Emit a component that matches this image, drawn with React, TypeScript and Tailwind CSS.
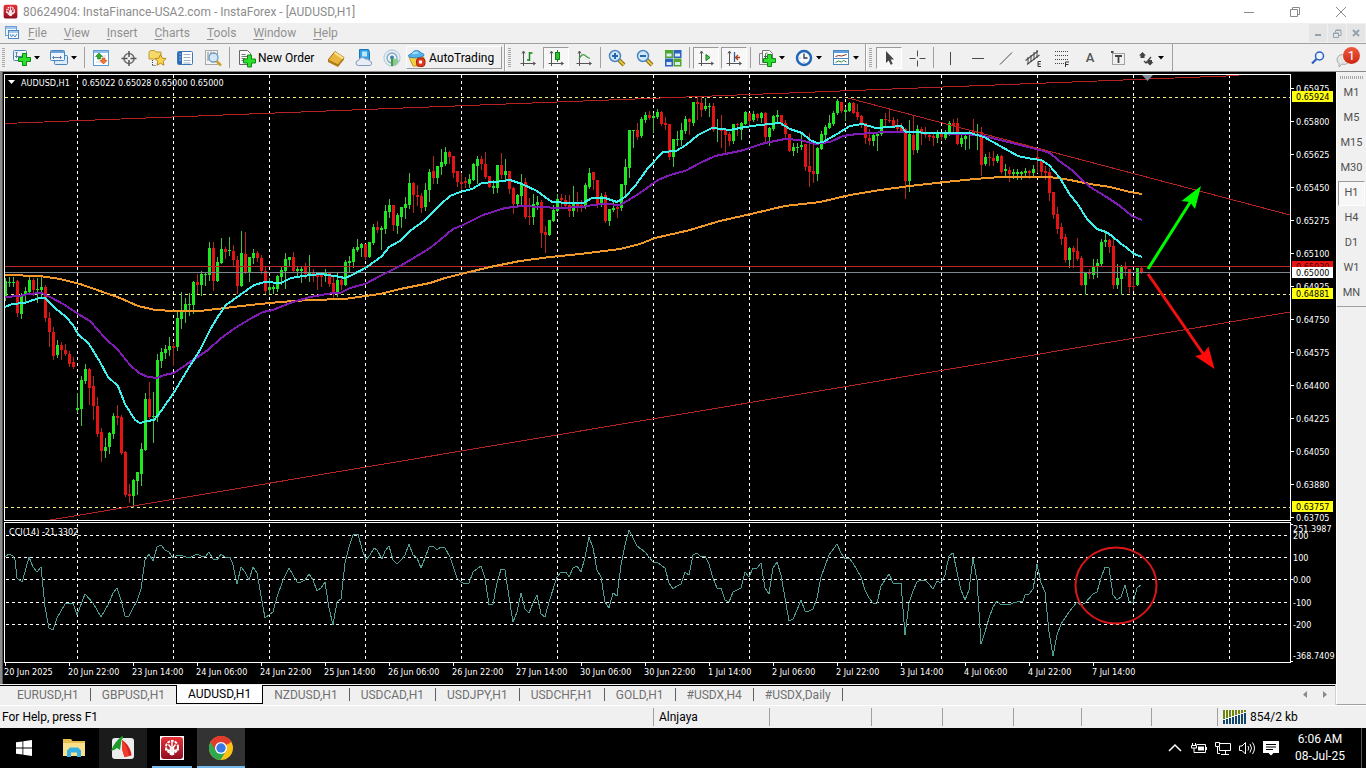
import type { ReactNode } from "react";

// One row per hourly bar: [high, body top, body bottom, low, bullish]
type Bar = [number, number, number, number, 0 | 1];

const BARS: Bar[] = [
  [278, 281, 298, 300, 1], [277, 282, 283, 286, 1], [277, 282, 283, 286, 1], [280, 281, 313, 316, 0],
  [293, 295, 314, 318, 1], [287, 291, 295, 302, 1], [277, 280, 292, 293, 1], [278, 280, 290, 295, 0],
  [278, 289, 290, 302, 1], [276, 287, 290, 297, 1], [285, 287, 318, 321, 0], [312, 318, 332, 346, 0],
  [327, 332, 356, 359, 0], [340, 345, 355, 357, 1], [342, 345, 350, 359, 0], [344, 350, 354, 355, 0],
  [351, 354, 364, 366, 0], [357, 362, 367, 368, 0], [393, 408, 410, 412, 1], [376, 380, 409, 425, 1],
  [364, 369, 381, 383, 1], [368, 369, 388, 404, 0], [376, 386, 406, 419, 0], [397, 406, 434, 436, 0],
  [428, 432, 451, 461, 0], [438, 447, 451, 457, 1], [432, 433, 447, 453, 1], [413, 416, 434, 438, 1],
  [405, 416, 418, 424, 0], [415, 417, 453, 454, 0], [451, 452, 495, 496, 0], [484, 494, 496, 502, 0],
  [479, 480, 496, 507, 1], [472, 472, 481, 494, 1], [443, 449, 474, 485, 1], [393, 399, 450, 450, 1],
  [382, 399, 417, 418, 0], [392, 416, 417, 442, 1], [354, 360, 417, 421, 1], [348, 352, 361, 367, 1],
  [345, 349, 353, 358, 1], [337, 346, 350, 355, 1], [343, 346, 348, 365, 0], [311, 318, 347, 350, 1],
  [292, 311, 319, 328, 1], [298, 304, 312, 322, 1], [293, 304, 305, 315, 1], [281, 282, 305, 313, 1],
  [274, 282, 285, 293, 0], [271, 274, 285, 295, 1], [272, 274, 275, 285, 1], [242, 248, 275, 280, 1],
  [242, 248, 281, 290, 0], [257, 262, 281, 281, 1], [238, 249, 263, 263, 1], [247, 249, 252, 258, 0],
  [237, 250, 251, 255, 1], [245, 251, 260, 266, 0], [256, 260, 286, 293, 0], [231, 253, 286, 286, 1],
  [232, 254, 272, 273, 0], [257, 257, 272, 281, 1], [249, 253, 258, 263, 1], [251, 253, 258, 261, 0],
  [255, 258, 271, 273, 0], [267, 271, 291, 293, 0], [278, 287, 290, 293, 1], [285, 287, 289, 293, 1],
  [275, 276, 289, 291, 1], [267, 270, 277, 284, 1], [253, 259, 271, 288, 1], [257, 257, 260, 265, 1],
  [252, 257, 271, 272, 0], [267, 269, 271, 277, 1], [266, 269, 271, 282, 1], [263, 267, 274, 278, 0],
  [255, 273, 275, 281, 1], [269, 273, 276, 281, 0], [273, 274, 277, 289, 0], [274, 275, 277, 286, 0],
  [269, 273, 276, 281, 1], [272, 273, 284, 286, 0], [276, 283, 294, 297, 0], [272, 280, 294, 296, 1],
  [276, 280, 285, 289, 0], [260, 262, 285, 285, 1], [256, 261, 263, 272, 1], [247, 249, 262, 267, 1],
  [239, 247, 250, 251, 1], [243, 244, 248, 256, 1], [244, 244, 257, 259, 0], [242, 242, 257, 257, 1],
  [224, 227, 243, 244, 1], [221, 227, 230, 232, 0], [226, 228, 230, 249, 1], [205, 211, 229, 233, 1],
  [199, 205, 212, 217, 1], [205, 205, 225, 230, 0], [213, 215, 226, 233, 1], [207, 207, 217, 227, 1],
  [197, 204, 208, 218, 1], [173, 183, 205, 208, 1], [182, 183, 195, 212, 0], [185, 195, 197, 205, 0],
  [193, 196, 208, 212, 0], [183, 190, 207, 210, 1], [169, 172, 190, 201, 1], [156, 171, 178, 183, 0],
  [166, 166, 178, 183, 1], [149, 162, 167, 174, 1], [147, 152, 164, 165, 1], [151, 152, 157, 163, 0],
  [156, 156, 173, 177, 0], [171, 171, 182, 186, 0], [173, 182, 184, 189, 0], [177, 181, 183, 187, 0],
  [174, 179, 184, 187, 1], [163, 164, 180, 180, 1], [156, 159, 166, 183, 1], [156, 159, 164, 169, 0],
  [152, 164, 177, 178, 0], [176, 176, 187, 187, 0], [180, 186, 188, 193, 1], [165, 165, 188, 192, 1],
  [153, 165, 175, 178, 0], [159, 171, 175, 179, 1], [171, 171, 189, 193, 0], [187, 188, 204, 213, 0],
  [194, 195, 204, 207, 1], [174, 183, 196, 206, 1], [178, 182, 217, 218, 0], [198, 216, 217, 224, 0],
  [194, 204, 217, 224, 1], [196, 202, 205, 209, 1], [200, 202, 233, 247, 0], [226, 232, 235, 252, 0],
  [220, 220, 235, 235, 1], [205, 210, 221, 221, 1], [194, 199, 211, 211, 1], [194, 198, 200, 207, 0],
  [195, 200, 206, 208, 0], [195, 205, 211, 216, 0], [186, 204, 211, 216, 1], [192, 203, 207, 211, 0],
  [200, 205, 207, 211, 0], [183, 185, 207, 208, 1], [168, 173, 187, 188, 1], [172, 172, 180, 189, 0],
  [180, 180, 204, 207, 0], [193, 196, 204, 206, 1], [192, 195, 221, 222, 0], [209, 209, 221, 225, 1],
  [202, 208, 210, 211, 1], [206, 207, 209, 217, 0], [184, 184, 208, 210, 1], [159, 167, 185, 194, 1],
  [130, 130, 168, 177, 1], [130, 130, 131, 147, 1], [123, 130, 137, 139, 0], [117, 119, 136, 137, 1],
  [112, 115, 120, 122, 1], [111, 115, 118, 119, 0], [113, 116, 118, 132, 1], [109, 112, 117, 118, 1],
  [111, 112, 124, 125, 0], [117, 123, 125, 129, 0], [124, 124, 157, 159, 0], [139, 139, 157, 166, 1],
  [131, 139, 140, 145, 1], [123, 130, 140, 145, 1], [116, 119, 131, 133, 1], [118, 119, 122, 134, 0],
  [102, 102, 123, 125, 1], [97, 102, 104, 119, 0], [97, 103, 110, 116, 0], [98, 106, 109, 110, 1],
  [103, 106, 107, 116, 1], [103, 106, 130, 131, 0], [119, 128, 129, 141, 1], [115, 129, 131, 147, 0],
  [129, 130, 135, 152, 0], [132, 134, 141, 145, 0], [124, 124, 141, 143, 1], [123, 124, 125, 135, 0],
  [122, 123, 130, 139, 1], [111, 112, 124, 124, 1], [113, 113, 121, 125, 0], [111, 114, 120, 121, 1],
  [113, 114, 118, 120, 0], [112, 113, 118, 122, 1], [112, 113, 137, 141, 0], [127, 128, 137, 145, 1],
  [115, 116, 129, 130, 1], [110, 115, 117, 122, 1], [115, 115, 124, 125, 0], [120, 123, 134, 138, 0],
  [134, 134, 151, 151, 0], [143, 147, 151, 155, 1], [143, 147, 148, 152, 1], [134, 145, 147, 149, 1],
  [144, 144, 167, 170, 0], [133, 166, 172, 186, 0], [145, 171, 174, 182, 0], [147, 148, 174, 180, 1],
  [131, 134, 149, 149, 1], [125, 127, 135, 139, 1], [115, 123, 128, 128, 1], [111, 113, 124, 125, 1],
  [99, 101, 113, 114, 1], [102, 102, 111, 112, 0], [107, 110, 112, 120, 1], [102, 103, 111, 111, 1],
  [102, 103, 113, 113, 0], [104, 112, 117, 119, 0], [115, 116, 124, 127, 0], [123, 123, 138, 143, 0],
  [129, 138, 141, 144, 0], [134, 135, 141, 145, 1], [132, 134, 136, 150, 1], [119, 119, 134, 135, 1],
  [113, 119, 120, 125, 0], [108, 120, 121, 122, 0], [117, 120, 127, 127, 0], [119, 125, 129, 131, 0],
  [123, 127, 131, 131, 0], [128, 129, 181, 198, 0], [120, 134, 181, 191, 1], [115, 135, 150, 154, 0],
  [125, 129, 150, 152, 1], [127, 129, 133, 144, 0], [127, 132, 135, 137, 0], [132, 135, 137, 140, 0],
  [133, 136, 138, 145, 0], [130, 134, 138, 142, 1], [132, 134, 137, 139, 0], [130, 134, 138, 139, 1],
  [121, 123, 134, 135, 1], [119, 123, 126, 133, 0], [118, 123, 144, 144, 0], [134, 138, 144, 146, 1],
  [133, 136, 139, 149, 1], [130, 133, 135, 148, 1], [119, 131, 133, 135, 0], [124, 132, 133, 149, 1],
  [127, 132, 165, 175, 0], [154, 157, 164, 165, 1], [152, 157, 158, 165, 0], [151, 158, 161, 165, 0],
  [154, 156, 161, 162, 1], [155, 156, 172, 173, 0], [164, 169, 171, 176, 1], [167, 170, 174, 181, 0],
  [169, 172, 174, 178, 1], [169, 172, 174, 179, 1], [171, 172, 174, 179, 1], [168, 171, 173, 176, 1],
  [170, 171, 173, 178, 0], [165, 169, 173, 175, 1], [150, 157, 160, 172, 0], [160, 160, 172, 175, 0],
  [166, 171, 173, 179, 0], [168, 172, 193, 200, 0], [192, 192, 215, 218, 0], [207, 214, 229, 233, 0],
  [223, 227, 239, 244, 0], [234, 237, 260, 262, 0], [247, 248, 260, 267, 1], [246, 248, 252, 267, 0],
  [238, 251, 259, 260, 0], [256, 258, 285, 285, 0], [273, 273, 285, 294, 1], [269, 272, 274, 278, 0],
  [259, 267, 275, 278, 1], [259, 263, 267, 277, 1], [239, 242, 264, 266, 1], [233, 240, 242, 246, 1],
  [239, 240, 247, 252, 0], [239, 246, 285, 288, 0], [264, 278, 285, 288, 1], [265, 267, 279, 294, 1],
  [262, 267, 269, 275, 0], [269, 269, 287, 292, 0], [277, 286, 287, 290, 0], [268, 268, 285, 285, 1],
  [267, 268, 273, 273, 0],
];

const FAST_MA =
  "5,307 12,304 25,303 33,300 40,298 45,298 55,308 66,317 73,325 78,334 89,344 100,362 108,377 118,386 125,404 135,420 140,423 147,421 154,420 161,411 173,394 188,369 200,350 210,330 217,318 226,305 240,295 254,285 265,282 281,283 291,278 303,276 320,274 335,276 345,278 352,275 367,267 382,256 389,247 400,241 410,231 425,220 440,205 450,196 460,192 472,189 482,183 495,182 510,180 522,184 537,191 545,197 552,202 570,203 583,203 592,198 605,198 617,202 625,197 635,186 648,168 663,152 676,151 686,145 698,135 712,128 730,130 745,127 760,125 780,123 790,129 802,133 810,140 817,143 823,142 837,134 850,126 862,124 876,128 890,127 901,126 906,132 935,133 950,133 970,133 984,137 1000,146 1018,156 1032,159 1041,160 1049,165 1060,178 1070,195 1077,203 1087,219 1097,229 1106,232 1112,236 1120,243 1127,248 1134,254 1142,257";
const MID_MA =
  "5,297 20,296 28,294 42,293 50,297 65,305 78,314 90,321 105,338 118,350 130,365 139,373 148,377 157,378 164,375 174,373 190,362 208,350 220,339 235,328 250,319 263,312 273,310 290,303 310,297 333,293 340,293 350,288 365,284 380,276 400,266 412,259 430,248 440,240 453,229 463,225 483,215 505,208 523,206 540,207 560,208 583,207 592,205 605,204 620,205 627,201 640,193 658,180 670,175 685,171 700,163 715,156 740,151 765,143 785,139 800,140 815,144 830,142 843,136 857,134 885,132 906,132 960,134 980,135 1000,140 1040,150 1050,153 1058,160 1073,171 1080,178 1090,187 1105,196 1120,206 1132,216 1142,220";
const SLOW_MA =
  "5,275 40,276 60,279 80,284 100,291 120,298 138,306 155,310 175,311 200,311 225,308 250,305 280,302 310,300 345,299 365,296 380,294 400,289 430,283 445,278 465,273 490,267 520,261 550,257 580,254 620,249 640,244 655,238 690,230 720,221 755,213 785,206 820,202 850,195 880,190 910,186 945,182 975,179 1000,177 1050,177 1070,180 1090,184 1110,187 1130,192 1142,194";
const CCI =
  "5,557 9,554 13,556 15,560 17,578 22,582 25,572 29,557 33,567 37,572 41,567 45,607 49,628 53,630 57,618 65,604 73,603 77,615 85,594 93,603 101,617 109,603 113,593 117,588 121,600 125,616 129,616 133,608 137,601 141,589 145,560 149,554 153,561 157,547 161,545 165,550 169,552 173,558 178,555 183,556 189,558 197,554 201,556 205,557 209,552 213,559 217,560 221,554 225,557 230,557 233,565 237,584 241,567 245,572 249,580 253,567 257,573 265,618 273,612 277,597 283,580 289,568 293,575 297,582 301,582 305,580 309,574 313,580 317,591 321,588 325,582 329,608 333,625 337,602 341,599 345,563 349,547 353,535 358,534 362,549 366,560 370,555 374,548 377,550 382,559 385,551 389,546 393,560 397,564 401,560 405,555 409,544 413,555 417,558 421,568 425,558 429,547 433,546 437,550 441,547 445,548 450,557 457,578 461,582 465,584 469,583 473,572 481,566 485,578 489,605 493,604 497,583 501,569 505,570 509,597 513,622 517,612 521,593 525,609 529,613 533,603 537,595 541,614 545,617 549,602 557,577 561,572 566,572 569,577 573,568 577,566 581,572 585,557 589,537 593,548 597,570 601,577 605,602 609,608 613,593 617,596 621,565 625,545 629,530 633,538 637,546 645,552 653,562 657,562 665,568 669,583 673,589 677,586 681,584 685,572 689,575 693,555 697,553 701,557 705,556 709,564 713,578 717,588 721,588 725,600 729,602 733,592 737,590 741,588 745,572 749,577 753,568 757,568 761,563 765,588 769,594 773,568 777,562 781,575 785,598 789,621 793,619 797,610 801,600 805,611 809,611 813,609 817,598 821,577 825,566 829,555 837,544 841,553 845,559 849,558 853,563 857,570 861,577 865,590 869,598 873,603 877,603 881,586 885,580 889,574 893,583 901,583 905,635 909,603 913,591 917,582 921,580 925,580 929,584 933,589 937,581 941,583 945,575 949,556 953,553 957,572 961,590 965,600 969,590 973,558 977,580 981,644 985,632 989,618 993,607 997,601 1001,605 1005,604 1009,605 1013,603 1017,602 1023,601 1025,595 1029,594 1033,589 1035,578 1037,564 1041,583 1045,592 1049,632 1053,656 1057,635 1061,624 1069,612 1077,602 1081,605 1085,603 1093,594 1097,592 1101,578 1105,567 1109,568 1113,595 1117,600 1121,597 1125,585 1129,601 1133,603 1137,588 1141,585";

const DATES = [
  "20 Jun 2025", "20 Jun 22:00", "23 Jun 14:00", "24 Jun 06:00", "24 Jun 22:00", "25 Jun 14:00",
  "26 Jun 06:00", "26 Jun 22:00", "27 Jun 14:00", "30 Jun 06:00", "30 Jun 22:00", "1 Jul 14:00",
  "2 Jul 06:00", "2 Jul 22:00", "3 Jul 14:00", "4 Jul 06:00", "4 Jul 22:00", "7 Jul 14:00",
];
const PRICES = [
  "0.65975", "0.65800", "0.65625", "0.65450", "0.65275", "0.65100", "0.64925",
  "0.64750", "0.64575", "0.64400", "0.64225", "0.64050", "0.63880", "0.63705",
];
const CCI_LEVELS: [string, number][] = [["200", 535], ["100", 557], ["0.00", 579], ["-100", 602], ["-200", 624]];
const DAYS = Array.from({ length: 13 }, (_, i) => 77 + i * 96);

const TABS = [
  "EURUSD,H1", "GBPUSD,H1", "AUDUSD,H1", "NZDUSD,H1", "USDCAD,H1",
  "USDJPY,H1", "USDCHF,H1", "GOLD,H1", "#USDX,H4", "#USDX,Daily",
];
const TIMEFRAMES = ["M1", "M5", "M15", "M30", "H1", "H4", "D1", "W1", "MN"];
const MENU = ["File", "View", "Insert", "Charts", "Tools", "Window", "Help"];

function PriceTag({ y, fill, color, value }: { y: number; fill: string; color: string; value: string }) {
  return (
    <>
      <rect x="1292" y={y} width="41" height="11" fill={fill} />
      <text x="1296" y={y + 9} fill={color}>{value}</text>
    </>
  );
}

function Chart() {
  return (
    <svg
      viewBox="2 72 1334 612"
      className="block h-auto w-full bg-black font-['DejaVu_Sans_Condensed','DejaVu_Sans',sans-serif] text-[9px]"
      role="img"
      aria-label="AUDUSD hourly chart"
    >
      <rect x="2" y="72" width="1" height="612" fill="#555" />

      {/* grid */}
      <g stroke="#fff" strokeDasharray="3 3" shapeRendering="crispEdges">
        {DAYS.map((x) => (
          <path key={x} d={`M${x + 0.5} 75V520M${x + 0.5} 524V659`} />
        ))}
        {CCI_LEVELS.map(([, y]) => (
          <path key={y} d={`M6 ${y + 0.5}H1288`} />
        ))}
      </g>
      <path d="M5 97.5H1290M5 294.5H1290M5 507.5H1290" stroke="#f0f080" strokeDasharray="3 3" shapeRendering="crispEdges" />

      <g shapeRendering="crispEdges">
        {BARS.map(([high, top, bottom, low, up], i) => {
          const x = 5 + i * 4;
          return (
            <g key={i}>
              <rect x={x} y={high} width="1" height={low - high + 1} fill={up ? "#46c046" : "#b02a22"} />
              <rect x={x - 1} y={top} width="3" height={Math.max(bottom - top, 1)} fill={up ? "#1ee81e" : "#e41414"} />
            </g>
          );
        })}
      </g>

      <path d="M5 266.5H1290" stroke="#b82828" shapeRendering="crispEdges" />
      <path d="M5 272.5H1290" stroke="#7d868e" shapeRendering="crispEdges" />
      <g fill="none" strokeWidth="2" strokeLinejoin="round" shapeRendering="crispEdges">
        <polyline points={SLOW_MA} stroke="#f0982a" />
        <polyline points={MID_MA} stroke="#7e1cb4" />
        <polyline points={FAST_MA} stroke="#40f0ee" />
      </g>
      <g stroke="#b42222" shapeRendering="crispEdges">
        <path d="M5 123.5L1239 75.5" />
        <path d="M50 520L1290 312" />
        <path d="M848 98L1290 215" />
      </g>
      <polyline points={CCI} fill="none" stroke="#4f9c94" shapeRendering="crispEdges" />

      {/* window frames */}
      <g fill="none" stroke="#fff" shapeRendering="crispEdges">
        <path d="M4.5 520.5V74.5H1290.5V520.5Z" />
        <path d="M4.5 522.5H1290.5V662.5H4.5Z" />
        {PRICES.map((p, i) => (
          <path key={p} d={`M1291 ${88.5 + i * 33}h3`} />
        ))}
        {DATES.map((d, i) => (
          <path key={d} d={`M${5.5 + i * 64} 663v3`} />
        ))}
        <path d="M1291 524.5h2M1291 661.5h2M1291 579.5h2" />
      </g>
      <path d="M1142 75h11l-5.500 6z" fill="#7f8b98" />

      {/* scales */}
      <g fill="#fff">
        <path d="M8 80h7l-3.500 4z" />
        <text x="21" y="86">AUDUSD,H1</text>
        <text x="82" y="86">0.65022 0.65028 0.65000 0.65000</text>
        <text x="9" y="535">CCI(14) -21.3302</text>
        {PRICES.map((p, i) => (
          <text key={p} x="1296" y={92 + i * 33}>{p}</text>
        ))}
        <text x="1293" y="532">251.3987</text>
        {CCI_LEVELS.map(([label, y]) => (
          <text key={label} x="1293" y={y + 4}>{label}</text>
        ))}
        <text x="1293" y="659">-368.7409</text>
        {DATES.map((d, i) => (
          <text key={d} x={4 + i * 64} y="675">{d}</text>
        ))}
      </g>
      <PriceTag y={91} fill="#ffff10" color="#000" value="0.65924" />
      <PriceTag y={261} fill="#e81414" color="#400" value="0.65030" />
      <PriceTag y={267} fill="#fff" color="#000" value="0.65000" />
      <PriceTag y={288} fill="#ffff10" color="#000" value="0.64881" />
      <PriceTag y={501} fill="#ffff10" color="#000" value="0.63757" />

      {/* scenario drawings */}
      <path d="M1148 269L1191 201" stroke="#00fa00" strokeWidth="3" />
      <path d="M1201 186L1181.500 201L1190 202L1195 209Z" fill="#00fa00" />
      <path d="M1148 274L1204 355" stroke="#f01010" strokeWidth="3" />
      <path d="M1214.500 369L1195 356L1203 354L1208.500 346.500Z" fill="#ff0a0a" />
      <ellipse cx="1116" cy="585.500" rx="40.500" ry="38" fill="none" stroke="#dc1616" strokeWidth="2" />
    </svg>
  );
}

function Icon({ children, size = 20 }: { children: ReactNode; size?: number }) {
  return (
    <svg width={size} height={size} viewBox="0 0 20 20" fill="none" className="shrink-0" aria-hidden="true">
      {children}
    </svg>
  );
}

const Plus = ({ x, y }: { x: number; y: number }) => (
  <path
    d={`M${x + 4} ${y}h4v4h4v4h-4v4h-4v-4h-4v-4h4z`}
    fill="#2be02b"
    stroke="#0d8a12"
    strokeWidth="1"
  />
);

const Axes = () => (
  <path d="M5.500 3.500V18M2.500 15.500H17M4 5.500L5.500 3L7 5.500M15 14l2.500 1.500L15 17" stroke="#555" />
);

const Magnifier = ({ minus }: { minus?: boolean }) => (
  <>
    <path d="M12 12l5 5" stroke="#8a6d10" strokeWidth="4" />
    <path d="M12 12l5 5" stroke="#e8c840" strokeWidth="2" />
    <circle cx="8" cy="8" r="5.500" fill="#cfe8fb" stroke="#4d86c0" strokeWidth="1.500" />
    <path d={minus ? "M5 8h6" : "M5 8h6M8 5v6"} stroke="#2767a8" strokeWidth="2" />
  </>
);

const ICONS: Record<string, ReactNode> = {
  newChart: (
    <>
      <rect x="1.500" y="2.500" width="13" height="10" rx="1" fill="#eef5fc" stroke="#4a84bd" />
      <path d="M4.500 4v6M3 8.500h8M3.500 5l1-1 1 1M10 7.500l1 1-1 1" stroke="#5c7fa5" />
      <Plus x={6.5} y={5.5} />
    </>
  ),
  profiles: (
    <>
      <rect x="5.500" y="7.500" width="13" height="9" rx="1" fill="#dcebf8" stroke="#4a84bd" />
      <rect x="1.500" y="2.500" width="14" height="10" rx="1" fill="#eef5fc" stroke="#4a84bd" />
      <path d="M2 4h13" stroke="#6fa3d6" strokeWidth="2" />
      <path d="M4 9.500h8M5 8l-1.500 1.500L5 11M11 8l1.500 1.500L11 11" stroke="#5c7fa5" />
    </>
  ),
  marketWatch: (
    <>
      <rect x="2.500" y="2.500" width="15" height="15" fill="#fff" stroke="#5b9bd8" />
      <path d="M3 4h14" stroke="#8fc0ee" strokeWidth="2" />
      <path d="M5 14h10M5 8h10" stroke="#c8d6e4" />
      <path d="M8 5l3.500 3.500H9.500V11h-3V8.500H4.500z" fill="#2eae2e" stroke="#117a11" strokeWidth=".6" />
      <path d="M12.500 16L9 12.500h2V10h3v2.500h2z" fill="#f07a30" stroke="#c43e10" strokeWidth=".6" />
    </>
  ),
  target: (
    <>
      <circle cx="10" cy="10.500" r="5" stroke="#707070" strokeWidth="1.500" />
      <path d="M10 3v6M10 12v6M2.500 10.500h6M11.500 10.500h6" stroke="#555" strokeWidth="1.500" />
    </>
  ),
  navigator: (
    <>
      <path d="M2 4l1.500-1.500h4L9 4h5v7H2z" fill="#f5d96a" stroke="#c29a2a" />
      <path d="M5.500 12v6M5.500 17.500h4" stroke="#444" strokeDasharray="1 1" />
      <path d="M13.500 6.500l1.700 3.600 3.900.5-2.900 2.700.8 3.900-3.500-1.900-3.500 1.900.8-3.900L8 10.600l3.800-.5z" fill="#fbd648" stroke="#b8891c" />
    </>
  ),
  dataWindow: (
    <>
      <rect x="2.500" y="3.500" width="15" height="13" rx="1" fill="#fff" stroke="#3f77b0" />
      <rect x="3" y="4" width="4" height="12" fill="#2e6bb4" />
      <path d="M8.500 6.500h7M8.500 9.500h7M8.500 12.500h7M8.500 15h7" stroke="#9bb2c8" />
      <path d="M4.500 6h1M4.500 9h1M4.500 12h1" stroke="#fff" />
    </>
  ),
  tester: (
    <>
      <rect x="2.500" y="2.500" width="12" height="14" fill="#f4f4f4" stroke="#a8a8a8" />
      <path d="M5 4v9M8 3.500v4M11 4v5" stroke="#888" />
      <circle cx="10.500" cy="9.500" r="4.500" fill="#cfe6f8" fillOpacity=".85" stroke="#6c9cc8" strokeWidth="1.300" />
      <path d="M13.500 13l4.500 4.500" stroke="#d0a22c" strokeWidth="2.500" />
    </>
  ),
  order: (
    <>
      <path d="M2.500 2.500h8l3 3v11h-11z" fill="#fafafa" stroke="#666" />
      <path d="M4.500 6.500h4M4.500 8.500h6M4.500 10.500h4M4.500 12.500h3" stroke="#777" />
      <Plus x={6.500} y={7} />
    </>
  ),
  metaEditor: (
    <>
      <path d="M2 12L9 3.500l9 6-6 7.500z" fill="#e9b53c" stroke="#9a6a10" />
      <path d="M9 3.500l9 6-1.500 2L8 5.500z" fill="#fbe08a" />
      <path d="M2 12l10 5 6-7.500v2l-6 7.500-10-5z" fill="#b57c14" />
    </>
  ),
  cloud: (
    <>
      <path d="M5.500 1.500h9l1 3v7h-10z" fill="#2fa4e8" stroke="#1876b8" />
      <path d="M8 3.500h5v5H8z" fill="#bfe6fb" />
      <path d="M4.500 17.500a2.500 2.500 0 010-5 4 4 0 017-1.500 3.500 3.500 0 014 2 2.300 2.300 0 01.5 4.500z" fill="#e8eef8" stroke="#8497bd" />
    </>
  ),
  signals: (
    <>
      <circle cx="10" cy="10" r="8" stroke="#b9cfe0" strokeWidth="1.300" />
      <circle cx="10" cy="10" r="5" stroke="#7aa6c8" strokeWidth="1.300" />
      <path d="M10 10v8a8 8 0 007-6z" fill="#8cc98c" />
      <circle cx="10" cy="9.500" r="2" fill="#3f7fb4" />
      <path d="M10 10v8" stroke="#3f9c4a" strokeWidth="2" />
    </>
  ),
  auto: (
    <>
      <path d="M2 9l4 9h7l4-9z" fill="#f3cf45" stroke="#c79a1c" />
      <path d="M1.500 8c0-1.500 2-2 3.500-2.500C6 2 12 1.500 14 5c2 .5 3 1 3 2 0 3-15 4-15.500 1z" fill="#55b4ec" stroke="#2b86c4" />
      <path d="M5 6c1-3 6-3.500 7-1-2 1-4 1.500-7 1z" fill="#a6dcfa" />
      <rect x="9.500" y="10" width="8.500" height="8.500" rx="3" fill="#e03a1c" stroke="#a81c08" />
      <rect x="12" y="12.500" width="3" height="3" fill="#fff" />
    </>
  ),
  bars: (
    <>
      <Axes />
      <path d="M11.500 4v9M11.500 5h3M9 12h3" stroke="#18861c" strokeWidth="1.500" />
    </>
  ),
  candles: (
    <>
      <Axes />
      <path d="M11.500 2v12" stroke="#118014" />
      <rect x="9.500" y="4.500" width="4" height="7" fill="#27c62c" stroke="#118014" />
    </>
  ),
  line: (
    <>
      <Axes />
      <path d="M5 11c2-4 4-5 5.500-4S13 9.500 16 10.500" stroke="#3f9a42" strokeWidth="1.300" />
    </>
  ),
  zoomIn: <Magnifier />,
  zoomOut: <Magnifier minus />,
  tile: (
    <>
      <rect x="2" y="2" width="8" height="8" fill="#4fa82c" />
      <rect x="10.500" y="2" width="8" height="8" fill="#2c62c0" />
      <rect x="2" y="10.500" width="8" height="8" fill="#2c62c0" />
      <rect x="10.500" y="10.500" width="8" height="8" fill="#4fa82c" />
      <path d="M3.500 5.500h5v3h-5zM12 5.500h5v3h-5zM3.500 14h5v3h-5zM12 14h5v3h-5z" fill="#dfeaf8" />
    </>
  ),
  autoScroll: (
    <>
      <Axes />
      <path d="M10 6.500v6l4-3z" fill="#59c45c" stroke="#147a18" />
    </>
  ),
  shift: (
    <>
      <Axes />
      <path d="M10.500 4v10" stroke="#2e5f9a" strokeWidth="1.300" />
      <path d="M16 9.500h-4M14 7l-2.500 2.500L14 12" stroke="#b0401c" strokeWidth="1.300" />
    </>
  ),
  indicators: (
    <>
      <path d="M2.500 5.500h8v11h-8z" fill="#f2f2f2" stroke="#888" />
      <path d="M5.500 2.500h7l3 3v9h-10z" fill="#fafafa" stroke="#777" />
      <path d="M10.500 5c-2-.5-2 1-2 3v4M7 8.500h3.500" stroke="#555" />
      <Plus x={6.500} y={6.500} />
    </>
  ),
  clock: (
    <>
      <circle cx="10" cy="10" r="7" fill="#f4f9fe" stroke="#2266b8" strokeWidth="2.500" />
      <path d="M10 5.500V10h3.500" stroke="#333" strokeWidth="1.300" />
      <path d="M10 14v1M5.500 10h1" stroke="#777" />
    </>
  ),
  template: (
    <>
      <rect x="2.500" y="2.500" width="15" height="14" fill="#fff" stroke="#4a86c0" />
      <path d="M3 4h14" stroke="#5f9fdc" strokeWidth="2" />
      <path d="M3 10.500h14" stroke="#4a86c0" />
      <path d="M4.500 8.500l3-1 3 .500 5-1.500" stroke="#8a2a18" />
      <path d="M4.500 14.500l3-1.500 3 1 2-1.500 3 1.500" stroke="#2d8a30" />
    </>
  ),
  cursor: <path d="M7 3v12l2.700-2.600 2 4.400 2-.9-2-4.300H15z" fill="#454545" />,
  cross: <path d="M10.500 2.500v6M10.500 12.500v6M2.500 10.500h6M12.500 10.500h6" stroke="#4a4a4a" />,
  vline: <path d="M10.500 4v13" stroke="#4a4a4a" />,
  hline: <path d="M4 10.500h12" stroke="#4a4a4a" />,
  trend: <path d="M4 16.500L16 4.500" stroke="#4a4a4a" />,
  channel: (
    <>
      <path d="M1.500 12.500L14 3M3 16.500L15.500 7" stroke="#555" strokeWidth="1.300" />
      <path d="M4 9v7M7 7v7M10 4v8M13 2v8" stroke="#444" />
      <path d="M17 13.500h-3v5h3M14 16h2.500" stroke="#333" />
    </>
  ),
  fibo: (
    <>
      <path d="M3 3.500h14M3 7.500h14M3 11.500h14M3 15.500h9" stroke="#444" strokeDasharray="1 1" />
      <path d="M17 14h-3.500v5M13.500 16.500h3" stroke="#333" />
    </>
  ),
  label: (
    <>
      <rect x="4.500" y="5.500" width="12" height="11" stroke="#555" strokeDasharray="1 1" />
      <path d="M3 4h2.500M7 8h7M10.500 8v7" stroke="#444" strokeWidth="1.800" />
    </>
  ),
  arrows: (
    <>
      <path d="M3 7.500L6.500 4 10 7.500H8.500V10h-4V7.500zM10.500 14L14 17.500 17.500 14H16v-2h-4v2z" fill="#444" />
      <path d="M8 13l2 2 5-6" stroke="#444" strokeWidth="1.300" />
    </>
  ),
};

function Tool({ icon, label, pressed, menu }: { icon: string; label: string; pressed?: boolean; menu?: boolean }) {
  const look = pressed
    ? "border-t-[#9a9a9a] border-l-[#9a9a9a] border-b-white border-r-white bg-[#f7f7f7]"
    : "border-transparent";
  return (
    <button
      aria-label={label}
      aria-pressed={pressed}
      className={`flex h-[22px] shrink-0 items-center border ${look} ${menu ? "w-[37px] gap-[2px] pl-[3px]" : "mx-px w-[26px] justify-center"}`}
    >
      <Icon>{ICONS[icon]}</Icon>
      {menu && <Caret />}
    </button>
  );
}

const Caret = () => (
  <svg width="6" height="4" viewBox="0 0 6 4" aria-hidden="true">
    <path d="M0 0h6L3 3.500z" fill="#000" />
  </svg>
);

const Sep = () => <div className="mx-[2px] h-[21px] w-px shrink-0 bg-[#a0a0a0]" />;

const Grip = () => (
  <div className="mr-[3px] ml-[2px] h-5 w-[3px] shrink-0 bg-[repeating-linear-gradient(to_bottom,#a8a8a8_0_1px,#f0f0f0_1px_2px)]" />
);

function Toolbar() {
  return (
    <div className="flex h-[27px] items-center bg-[#f0f0f0]">
      <div className="flex h-full shrink-0 items-center border-r border-[#a0a0a0] pr-px">
        <Grip />
        <Tool icon="newChart" label="New chart" menu />
        <Tool icon="profiles" label="Profiles" menu />
        <Sep />
        <Tool icon="marketWatch" label="Market Watch" />
        <Tool icon="target" label="Crosshair lock" />
        <Tool icon="navigator" label="Navigator" />
        <Tool icon="dataWindow" label="Data Window" />
        <Tool icon="tester" label="Strategy Tester" />
        <Sep />
        <button className="flex h-[22px] w-[90px] shrink-0 items-center gap-px pl-[5px] text-xs whitespace-nowrap text-black">
          <Icon>{ICONS.order}</Icon>New Order
        </button>
        <Tool icon="metaEditor" label="MetaEditor" />
        <Tool icon="cloud" label="Virtual hosting" />
        <Tool icon="signals" label="Signals" />
        <button className="mr-px flex h-[23px] w-24 shrink-0 items-center gap-[2px] border border-t-white border-r-[#9a9a9a] border-b-[#9a9a9a] border-l-white text-xs text-black">
          <Icon>{ICONS.auto}</Icon>AutoTrading
        </button>
      </div>
      <div className="flex h-full shrink-0 items-center border-r border-l border-r-[#a0a0a0] border-l-white pr-px">
        <Grip />
        <Tool icon="bars" label="Bar chart" />
        <Tool icon="candles" label="Candlesticks" pressed />
        <Tool icon="line" label="Line chart" />
        <Sep />
        <Tool icon="zoomIn" label="Zoom in" />
        <Tool icon="zoomOut" label="Zoom out" />
        <Tool icon="tile" label="Tile windows" />
        <Sep />
        <Tool icon="autoScroll" label="Auto scroll" pressed />
        <Tool icon="shift" label="Chart shift" pressed />
        <Sep />
        <Tool icon="indicators" label="Indicators" menu />
        <Tool icon="clock" label="Periods" menu />
        <Tool icon="template" label="Templates" menu />
      </div>
      <div className="flex h-full shrink-0 items-center border-r border-l border-r-[#a0a0a0] border-l-white pr-[3px]">
        <Grip />
        <Tool icon="cursor" label="Cursor" pressed />
        <Tool icon="cross" label="Crosshair" />
        <Sep />
        <Tool icon="vline" label="Vertical line" />
        <Tool icon="hline" label="Horizontal line" />
        <Tool icon="trend" label="Trendline" />
        <Tool icon="channel" label="Equidistant channel" />
        <Tool icon="fibo" label="Fibonacci retracement" />
        <button className="w-7 shrink-0 text-center text-[13px] font-medium text-[#555]">A</button>
        <Tool icon="label" label="Text label" />
        <Tool icon="arrows" label="Arrows" menu />
      </div>
      <div className="ml-auto flex items-center gap-2 pr-1">
        <button aria-label="Search">
          <svg width="16" height="16" viewBox="0 0 16 16" fill="none">
            <circle cx="9.500" cy="6" r="4" fill="#eef4ff" stroke="#2c5fc4" strokeWidth="1.500" />
            <path d="M6.500 9L2 13.500" stroke="#2c5fc4" strokeWidth="2.200" />
          </svg>
        </button>
        <button aria-label="Notifications" className="relative h-6 w-7">
          <svg width="20" height="24" viewBox="0 0 20 24" fill="none">
            <path d="M3 14a6 5 0 0112-1 5 4.500 0 01-7 5l-3 3v-3.500A5 5 0 013 14z" fill="#e6e6e6" stroke="#aaa" />
          </svg>
          <span className="absolute top-px left-[9px] h-[17px] w-[17px] rounded-full bg-gradient-to-b from-[#ef5a40] to-[#cc2410] text-center text-[13px] leading-[17px] text-white">
            1
          </span>
        </button>
      </div>
    </div>
  );
}

function InstaLogo({ size }: { size: number }) {
  return (
    <svg width={size} height={size} viewBox="0 0 24 24" fill="none" className="shrink-0" aria-hidden="true">
      <defs>
        <linearGradient id="insta" x1="0" y1="0" x2="0" y2="1">
          <stop offset="0" stopColor="#e8323a" />
          <stop offset="1" stopColor="#8e0f22" />
        </linearGradient>
      </defs>
      <rect x="1" y="1" width="22" height="22" rx="3" fill="url(#insta)" />
      <circle cx="12" cy="11" r="6" stroke="#fff" strokeWidth="2" strokeDasharray="2.700 1.100" />
      <path d="M12 6v13.500M10.500 11v8M13.500 11v8M8.500 8.500l3 4M15.500 8.500l-3 4M5 13.500l5 1M19 13.500l-5 1" stroke="#fff" strokeWidth="1.400" />
    </svg>
  );
}

function TitleBar() {
  return (
    <header>
      <div className="flex h-[23px] items-center bg-white pl-[3px]">
        <InstaLogo size={15} />
        <h1 className="ml-[5px] text-xs text-[#8c8c8c]">80624904: InstaFinance-USA2.com - InstaForex - [AUDUSD,H1]</h1>
        <div className="ml-auto flex pr-[2px] text-[#8a8a8a]">
          <button aria-label="Minimize" className="flex w-[46px] justify-center">
            <svg width="12" height="12" fill="none" stroke="currentColor"><path d="M1 6.500h10" /></svg>
          </button>
          <button aria-label="Restore" className="flex w-[46px] justify-center">
            <svg width="12" height="12" fill="none" stroke="currentColor"><path d="M1.500 3.500h7v7h-7zM3.500 3V1.500h7v7H9" /></svg>
          </button>
          <button aria-label="Close" className="flex w-[46px] justify-center">
            <svg width="12" height="12" fill="none" stroke="currentColor"><path d="M1 1l10 10M11 1L1 11" /></svg>
          </button>
        </div>
      </div>
      <div className="flex h-5 items-center bg-[#f0f0f0] pl-1">
        <svg width="16" height="16" viewBox="0 0 16 16" fill="none" aria-hidden="true">
          <rect x="1.500" y="1.500" width="11" height="9" fill="#eef5fc" stroke="#6fa0d4" />
          <rect x="4.500" y="5.500" width="10" height="8" fill="#fff" stroke="#4f88c4" />
          <path d="M2 3h10M5 7h9" stroke="#8bb8e4" strokeWidth="1.500" />
          <path d="M6 9l1.500 3L9 9.500 11 12l2-3" stroke="#4f88c4" />
        </svg>
        <nav className="ml-2 flex gap-[17px] text-xs text-[#909090]">
          {MENU.map((m) => (
            <button key={m}>
              <span className="underline underline-offset-2">{m[0]}</span>
              {m.slice(1)}
            </button>
          ))}
        </nav>
        <div className="ml-auto flex gap-px pr-px text-[#93a3ae]">
          <button aria-label="Minimize chart" className="flex h-[18px] w-[18px] items-center justify-center bg-[#e5e5e5]">
            <svg width="8" height="8"><path d="M1 6h6" stroke="currentColor" strokeWidth="2" /></svg>
          </button>
          <button aria-label="Restore chart" className="flex h-[18px] w-[18px] items-center justify-center bg-[#e5e5e5]">
            <svg width="9" height="9" fill="none" stroke="currentColor"><path d="M.5 4h5v4.500h-5zM2.500 3.500v-2h5.500v5H6M.5 4.500h5M3 1h5" /></svg>
          </button>
          <button aria-label="Close chart" className="flex h-[18px] w-[18px] items-center justify-center bg-[#e5e5e5]">
            <svg width="8" height="8"><path d="M1 1l6 6M7 1L1 7" stroke="currentColor" strokeWidth="2" /></svg>
          </button>
        </div>
      </div>
      <div className="h-px bg-[#a0a0a0]" />
    </header>
  );
}

function Timeframes() {
  return (
    <aside className="flex w-[30px] shrink-0 flex-col border-b border-l border-b-[#a0a0a0] border-l-white bg-[#f0f0f0]">
      <div className="mx-auto mt-1 mb-[2px] h-[3px] w-6 bg-[repeating-linear-gradient(to_right,#a8a8a8_0_1px,#f0f0f0_1px_2px)]" />
      <div className="flex flex-col border-b border-[#a0a0a0]">
        {TIMEFRAMES.map((t) => (
          <button
            key={t}
            className={
              t === "H1"
                ? "mx-px h-[25px] border border-t-[#9a9a9a] border-r-white border-b-white border-l-[#9a9a9a] bg-[#f7f7f7] text-[11px] text-[#505050]"
                : "mx-px h-[25px] text-[11px] text-[#505050]"
            }
          >
            {t}
          </button>
        ))}
      </div>
    </aside>
  );
}

function Tabs() {
  return (
    <div className="flex h-[21px] items-start border-t border-r border-t-[#f0f0f0] border-r-[#d0d0d0] bg-[#f0f0f0]">
      <div className="flex h-5 w-full items-start border-t border-black pl-[6px]">
        {TABS.map((t) =>
          t === "AUDUSD,H1" ? (
            <button key={t} className="-mt-px h-[19px] border border-t-0 border-black bg-white px-[11px] text-xs text-black">
              {t}
            </button>
          ) : (
            <button key={t} className="flex h-[17px] items-center pl-[11px] text-xs text-[#707070]">
              {t}
              <span className={t === "GBPUSD,H1" ? "ml-[11px]" : "ml-[11px] h-[13px] w-px bg-[#606060]"} />
            </button>
          ),
        )}
        <div className="mt-[5px] mr-2 ml-auto flex gap-4 text-[#8a8a8a]">
          <button aria-label="Scroll tabs left">
            <svg width="4" height="7" className="block"><path d="M4 0v7L0 3.500z" fill="currentColor" /></svg>
          </button>
          <button aria-label="Scroll tabs right">
            <svg width="4" height="7" className="block"><path d="M0 0v7l4-3.500z" fill="currentColor" /></svg>
          </button>
        </div>
      </div>
    </div>
  );
}

const STATUS_CELLS = ["w-[102px]", "w-[71px]", "w-[71px]", "w-[68px]", "w-[70px]", "w-[66px]"];

function StatusBar() {
  return (
    <footer className="flex h-[23px] items-center border-t border-white bg-[#f0f0f0] text-xs text-black">
      <p className="flex-1 pl-[2px]">For Help, press F1</p>
      <p className="h-[18px] w-[116px] border-l border-[#a0a0a0] pl-[5px] leading-[18px]">Alnjaya</p>
      {STATUS_CELLS.map((w, i) => (
        <div key={i} className={`${w} h-[18px] border-l border-[#a0a0a0]`} />
      ))}
      <div className="flex h-[18px] w-[149px] items-center gap-1 border-l border-[#a0a0a0] pl-[5px]">
        <svg width="23" height="14" viewBox="0 0 23 14" shapeRendering="crispEdges" aria-hidden="true">
          {Array.from({ length: 8 }, (_, i) => (
            <g key={i}>
              <rect x={i * 3} y="0" width="2" height={9 - i} fill="#6f8412" />
              <rect x={i * 3} y={10 - i} width="2" height={4 + i} fill="#12466a" />
            </g>
          ))}
        </svg>
        854/2 kb
      </div>
    </footer>
  );
}

function Taskbar() {
  return (
    <div className="flex h-10 items-stretch bg-black text-white">
      <button aria-label="Start" className="flex w-12 items-center justify-center">
        <svg width="16" height="16" viewBox="0 0 16 16" fill="#fff">
          <path d="M0 2.300L6.500 1.400V7.600H0zM7.300 1.300L16 0v7.600H7.300zM0 8.400h6.500v6.200L0 13.700zM7.300 8.400H16V16l-8.700-1.200z" />
        </svg>
      </button>
      <button aria-label="File Explorer" className="flex w-[51px] items-center justify-center">
        <svg width="22" height="20" viewBox="0 0 22 20">
          <path d="M0 1h8l1.500 2H22v15H0z" fill="#e9bc4e" />
          <path d="M0 5h22v13H0z" fill="#fbe08c" />
          <path d="M4 19v-6.500L7 9.500h8l3 3V19h-4v-4.500H8V19z" fill="#35b0e4" />
        </svg>
      </button>
      <button aria-label="Screen recorder" className="flex w-12 items-center justify-center bg-[#1b1b1b]">
        <svg width="24" height="24" viewBox="0 0 24 24">
          <rect x="1" y="2" width="22" height="21" rx="3" fill="#ececec" />
          <path d="M0 15C2 9 6 4 11 0l1.500 1.500L10.500 4 9 14 6 12l-3 2z" fill="#1d9a2c" />
          <path d="M11 4c5 3 9 9 9.500 15.500l-7 1.500L11 13z" fill="#d81f1c" />
          <path d="M11 4c3 3 6 9 7 16l-4.500 1L11 13z" fill="#ef3a2c" />
        </svg>
      </button>
      <button aria-label="InstaForex" className="flex w-[50px] flex-col items-center pt-2">
        <span className="block bg-white"><InstaLogo size={24} /></span>
        <span className="mt-auto h-[2px] w-10 bg-[#76b9ed]" />
      </button>
      <button aria-label="Chrome" className="flex w-12 flex-col items-center bg-[#333] pt-2">
        <svg width="24" height="24" viewBox="0 0 24 24">
          <circle cx="12" cy="12" r="12" fill="#fbc116" />
          <path d="M12 12L1.600 6A12 12 0 0122.400 6z" fill="#e33b2e" />
          <path d="M12 12L1.600 6A12 12 0 0011.500 24L17 15z" fill="#2da94f" />
          <path d="M12 6h10.400a12 12 0 00-20.800 0L7 15z" fill="#e33b2e" />
          <circle cx="12" cy="12" r="6" fill="#fff" />
          <circle cx="12" cy="12" r="4.700" fill="#3b78e7" />
        </svg>
        <span className="mt-auto h-[2px] w-full bg-[#76b9ed]" />
      </button>
      <div className="ml-auto flex items-center">
        <div className="flex items-center gap-2">
          <button aria-label="Show hidden icons">
            <svg width="16" height="16" fill="none" stroke="#fff" strokeWidth="1.500" className="block"><path d="M2 11l6-6 6 6" /></svg>
          </button>
          <svg width="16" height="16" fill="none" stroke="#fff" aria-hidden="true">
            <path d="M5.500 4.500h9v8h-9M15.500 7v3" />
            <path d="M7 6.500h6v4H7z" fill="#fff" stroke="none" />
            <path d="M1.500 3v2M4.500 3v2M.500 5.500h5v2.500h-5zM3 8v4.500h3" />
          </svg>
          <svg width="16" height="16" fill="none" stroke="#fff" aria-hidden="true">
            <path d="M5 3.500h10.500v7H4.500V7M10.500 11v3M6 14.500h8M.5 2.500h4v4h-4zM2.500 6.500v7H5" />
          </svg>
          <svg width="16" height="16" fill="none" stroke="#fff" aria-hidden="true">
            <path d="M.5 6v4.500H3L6.500 14V2.500L3 6zM9 6q1.500 2 0 4.500M11 4q3 4 0 8.500M13.500 2.500q4 5.500 0 11.500" />
          </svg>
          <svg width="16" height="16" fill="#fff" aria-hidden="true">
            <path d="M0 1h16v12H10.500L8 15.500 5.500 13H0z" />
            <path d="M3 4.500h10M3 7h10M3 9.500h7" stroke="#000" />
          </svg>
        </div>
        <div className="w-[82px] text-center text-xs leading-[17px]">
          <p>6:06 AM</p>
          <p>08-Jul-25</p>
        </div>
        <div className="h-10 w-[5px] border-l border-[#555]" />
      </div>
    </div>
  );
}

export default function App() {
  return (
    <div className="flex min-h-screen flex-col bg-[#f0f0f0] font-[Roboto,'Open_Sans',sans-serif]">
      <TitleBar />
      <Toolbar />
      <div className="flex border-t border-[#8a8a8a]">
        <main className="min-w-0 flex-1">
          <div className="border-l-2 border-[#8a8a8a]">
            <Chart />
          </div>
          <Tabs />
        </main>
        <Timeframes />
      </div>
      <StatusBar />
      <Taskbar />
    </div>
  );
}
